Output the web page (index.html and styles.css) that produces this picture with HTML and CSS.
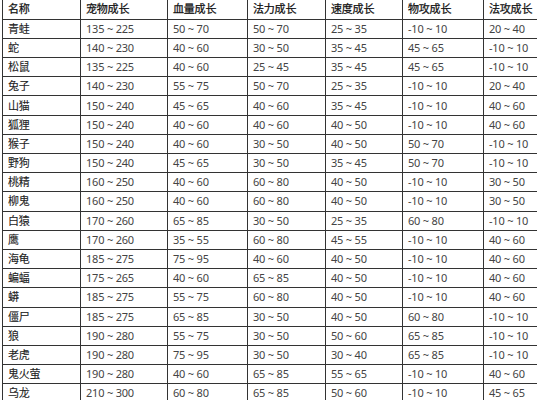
FILE: index.html
```html
<!DOCTYPE html>
<html lang="zh-CN">
<head>
<meta charset="utf-8">
<title>宠物成长表</title>
<link rel="stylesheet" href="styles.css">
</head>
<body>
<div class="frame">
<table class="growth">
<colgroup>
<col class="c-name"><col class="c-pet"><col class="c-hp"><col class="c-mp"><col class="c-spd"><col class="c-atk"><col class="c-mat">
</colgroup>
<thead>
<tr><th>名称</th><th>宠物成长</th><th>血量成长</th><th>法力成长</th><th>速度成长</th><th>物攻成长</th><th>法攻成长</th></tr>
</thead>
<tbody>
<tr><td class="nm">青蛙</td><td>135 ~ 225</td><td>50 ~ 70</td><td>50 ~ 70</td><td>25 ~ 35</td><td>-10 ~ 10</td><td>20 ~ 40</td></tr>
<tr><td class="nm">蛇</td><td>140 ~ 230</td><td>40 ~ 60</td><td>30 ~ 50</td><td>35 ~ 45</td><td>45 ~ 65</td><td>-10 ~ 10</td></tr>
<tr><td class="nm">松鼠</td><td>135 ~ 225</td><td>40 ~ 60</td><td>25 ~ 45</td><td>35 ~ 45</td><td>45 ~ 65</td><td>-10 ~ 10</td></tr>
<tr><td class="nm">兔子</td><td>140 ~ 230</td><td>55 ~ 75</td><td>50 ~ 70</td><td>25 ~ 35</td><td>-10 ~ 10</td><td>20 ~ 40</td></tr>
<tr><td class="nm">山猫</td><td>150 ~ 240</td><td>45 ~ 65</td><td>40 ~ 60</td><td>35 ~ 45</td><td>-10 ~ 10</td><td>40 ~ 60</td></tr>
<tr><td class="nm">狐狸</td><td>150 ~ 240</td><td>40 ~ 60</td><td>40 ~ 60</td><td>40 ~ 50</td><td>-10 ~ 10</td><td>40 ~ 60</td></tr>
<tr><td class="nm">猴子</td><td>150 ~ 240</td><td>40 ~ 60</td><td>30 ~ 50</td><td>40 ~ 50</td><td>50 ~ 70</td><td>-10 ~ 10</td></tr>
<tr><td class="nm">野狗</td><td>150 ~ 240</td><td>45 ~ 65</td><td>30 ~ 50</td><td>35 ~ 45</td><td>50 ~ 70</td><td>-10 ~ 10</td></tr>
<tr><td class="nm">桃精</td><td>160 ~ 250</td><td>40 ~ 60</td><td>60 ~ 80</td><td>40 ~ 50</td><td>-10 ~ 10</td><td>30 ~ 50</td></tr>
<tr><td class="nm">柳鬼</td><td>160 ~ 250</td><td>40 ~ 60</td><td>60 ~ 80</td><td>40 ~ 50</td><td>-10 ~ 10</td><td>30 ~ 50</td></tr>
<tr><td class="nm">白猿</td><td>170 ~ 260</td><td>65 ~ 85</td><td>30 ~ 50</td><td>25 ~ 35</td><td>60 ~ 80</td><td>-10 ~ 10</td></tr>
<tr><td class="nm">鹰</td><td>170 ~ 260</td><td>35 ~ 55</td><td>60 ~ 80</td><td>45 ~ 55</td><td>-10 ~ 10</td><td>40 ~ 60</td></tr>
<tr><td class="nm">海龟</td><td>185 ~ 275</td><td>75 ~ 95</td><td>40 ~ 60</td><td>40 ~ 50</td><td>-10 ~ 10</td><td>40 ~ 60</td></tr>
<tr><td class="nm">蝙蝠</td><td>175 ~ 265</td><td>40 ~ 60</td><td>65 ~ 85</td><td>40 ~ 50</td><td>-10 ~ 10</td><td>40 ~ 60</td></tr>
<tr><td class="nm">蟒</td><td>185 ~ 275</td><td>55 ~ 75</td><td>60 ~ 80</td><td>40 ~ 50</td><td>-10 ~ 10</td><td>40 ~ 60</td></tr>
<tr><td class="nm">僵尸</td><td>185 ~ 275</td><td>65 ~ 85</td><td>30 ~ 50</td><td>40 ~ 50</td><td>60 ~ 80</td><td>-10 ~ 10</td></tr>
<tr><td class="nm">狼</td><td>190 ~ 280</td><td>55 ~ 75</td><td>30 ~ 50</td><td>50 ~ 60</td><td>65 ~ 85</td><td>-10 ~ 10</td></tr>
<tr><td class="nm">老虎</td><td>190 ~ 280</td><td>75 ~ 95</td><td>30 ~ 50</td><td>30 ~ 40</td><td>65 ~ 85</td><td>-10 ~ 10</td></tr>
<tr><td class="nm">鬼火萤</td><td>190 ~ 280</td><td>40 ~ 60</td><td>65 ~ 85</td><td>55 ~ 65</td><td>-10 ~ 10</td><td>40 ~ 60</td></tr>
<tr><td class="nm">乌龙</td><td>210 ~ 300</td><td>60 ~ 80</td><td>65 ~ 85</td><td>50 ~ 60</td><td>-10 ~ 10</td><td>45 ~ 65</td></tr>
</tbody>
</table>
</div>
</body>
</html>
```
FILE: styles.css
```css
html, body {
  margin: 0;
  padding: 0;
  background: #ffffff;
  overflow: hidden;
}
.frame {
  width: 537px;
  height: 400px;
  overflow: hidden;
  padding-left: 2px;
  box-sizing: border-box;
}
.growth {
  border-collapse: collapse;
  table-layout: fixed;
  width: 561px;
  font-family: "Noto Sans", "Noto Sans CJK SC", sans-serif;
  font-size: 11px;
  letter-spacing: -0.2px;
  color: #444;
}
.c-name { width: 78px; }
.c-pet { width: 87px; }
.c-hp { width: 80px; }
.c-mp { width: 78px; }
.c-spd { width: 77px; }
.c-atk { width: 81px; }
.c-mat { width: 80px; }
.growth th,
.growth td {
  border: 1px solid #333;
  height: 19.2px;
  padding: 0 0 0 5px;
  box-sizing: border-box;
  text-align: left;
  vertical-align: middle;
  white-space: nowrap;
  line-height: 14px;
}
.growth th {
  border-top: none;
  font-weight: normal;
  color: #111;
  -webkit-text-stroke: 0.25px #111;
}
.growth td.nm {
  color: #222;
  -webkit-text-stroke: 0.1px #222;
}
```
